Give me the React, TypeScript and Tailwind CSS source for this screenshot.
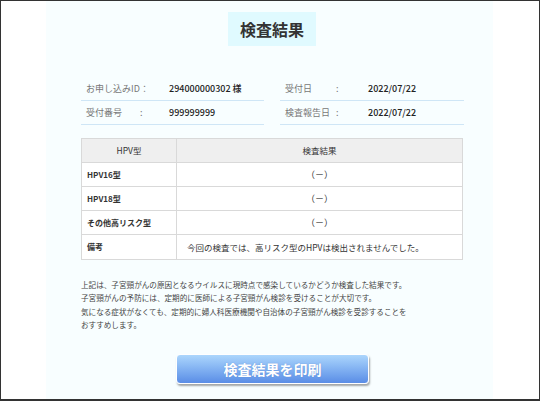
import React from "react";

const rows: { k: string; v: string; remark?: boolean }[] = [
  { k: "HPV16型", v: "（－）" },
  { k: "HPV18型", v: "（－）" },
  { k: "その他高リスク型", v: "（－）" },
  { k: "備考", v: "今回の検査では、高リスク型のHPVは検出されませんでした。", remark: true },
];

export default function App() {
  return (
    <div className="w-[540px] h-[401px] bg-white border border-[#333] border-b-2 font-['Noto_Sans_CJK_JP',sans-serif] text-[#333] flex">
      <div className="ml-[45px] w-[447px] h-full bg-[#f8feff] flex flex-col">
        {/* title */}
        <div className="mt-[11px] ml-[182px] w-[88px] h-[34px] bg-[#e0faff] flex items-center justify-center text-[16px] font-bold text-[#333] leading-none">
          検査結果
        </div>

        {/* info */}
        <div className="mt-[31px] ml-[35px] w-[383px] grid grid-cols-[183px_184px] gap-x-[16px] text-[9px] leading-none">
          <div className="h-[24px] border-b border-[#cfe6f6] flex items-center pl-[5px]">
            <span className="w-[54px] text-[#777]">お申し込みID</span>
            <span className="w-[29px] text-[#777]">：</span>
            <span className="text-[#222] font-medium">294000000302 様</span>
          </div>
          <div className="h-[24px] border-b border-[#cfe6f6] flex items-center pl-[5px]">
            <span className="w-[51px] text-[#777]">受付日</span>
            <span className="w-[32px] text-[#777]">:</span>
            <span className="text-[#222] font-medium">2022/07/22</span>
          </div>
          <div className="h-[24px] border-b border-[#cfe6f6] flex items-center pl-[5px]">
            <span className="w-[54px] text-[#777]">受付番号</span>
            <span className="w-[29px] text-[#777]">:</span>
            <span className="text-[#222] font-medium">999999999</span>
          </div>
          <div className="h-[24px] border-b border-[#cfe6f6] flex items-center pl-[5px]">
            <span className="w-[51px] text-[#777]">検査報告日</span>
            <span className="w-[32px] text-[#777]">:</span>
            <span className="text-[#222] font-medium">2022/07/22</span>
          </div>
        </div>

        {/* table */}
        <div className="mt-[13px] ml-[35px] w-[382px] border border-[#d9d9d9] bg-white text-[8.5px] leading-none">
          <div className="h-[24px] grid grid-cols-[95px_1fr] bg-[#efefef] border-b border-[#d9d9d9]">
            <div className="border-r border-[#d9d9d9] flex items-center justify-center">HPV型</div>
            <div className="flex items-center justify-center">検査結果</div>
          </div>
          {rows.map((r, i) => (
            <div
              key={r.k}
              className={
                "h-[24px] grid grid-cols-[95px_1fr] " +
                (i < rows.length - 1 ? "border-b border-[#d9d9d9]" : "")
              }
            >
              <div className="border-r border-[#d9d9d9] flex items-center pl-[5px] font-bold text-[8px]">
                {r.k}
              </div>
              <div
                className={
                  r.remark
                    ? "flex items-center pl-[10px] text-[8.5px]"
                    : "flex items-center justify-center text-[9px]"
                }
              >
                {r.v}
              </div>
            </div>
          ))}
        </div>

        {/* paragraph */}
        <div className="mt-[18px] ml-[35px] text-[7.6px] leading-[13.3px] text-[#444]">
          <p>上記は、子宮頸がんの原因となるウイルスに現時点で感染しているかどうか検査した結果です。</p>
          <p>子宮頸がんの予防には、定期的に医師による子宮頸がん検診を受けることが大切です。</p>
          <p>気になる症状がなくても、定期的に婦人科医療機関や自治体の子宮頸がん検診を受診することを</p>
          <p>おすすめします。</p>
        </div>

        {/* button */}
        <div className="mt-[23px] ml-[130px]">
          <button className="w-[193px] h-[30px] rounded-[4px] border border-white bg-gradient-to-b from-[#acd6fc] to-[#5a8de6] shadow-[1px_2px_2px_rgba(0,0,0,0.35)] text-white text-[14px] font-bold leading-none flex items-center justify-center [text-shadow:0_0_1px_rgba(60,100,180,0.6)]">
            検査結果を印刷
          </button>
        </div>
      </div>
    </div>
  );
}
